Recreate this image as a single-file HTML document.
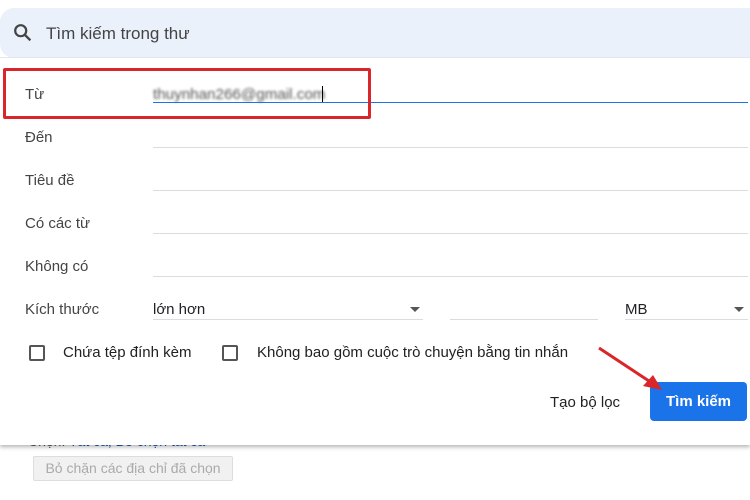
<!DOCTYPE html>
<html><head><meta charset="utf-8"><style>
body{margin:0;width:750px;height:500px;background:#fff;font-family:"Liberation Sans",Arial,sans-serif;position:relative;overflow:hidden;color:#202124}
.a{position:absolute}
.lbl{position:absolute;left:25px;font-size:15px;color:#444}
.ln{position:absolute;left:153px;right:2px;height:1px;background:#dadce0}
.cb{position:absolute;width:12px;height:12px;border:2px solid #555;border-radius:2px}
</style></head><body>
<div class="a" style="left:28px;top:433px;font-size:14px;color:#555">Chọn: <span style="color:#15c">Tất cả, Bỏ chọn tất cả</span></div>
<div class="a" style="left:0;top:0;width:750px;height:445px;background:#fff;box-shadow:0 2px 4px rgba(0,0,0,.3)"></div>
<div class="a" style="left:0;top:8px;width:750px;height:50px;background:#eaf1fb;border-top-left-radius:14px;border-bottom-left-radius:14px"></div>
<svg class="a" style="left:12px;top:22px" width="22" height="22" viewBox="0 0 24 24"><circle cx="9.5" cy="9.5" r="6" fill="none" stroke="#444" stroke-width="2.4"/><path d="M14 14l6 6" stroke="#444" stroke-width="2.6"/></svg>
<div class="a" style="left:46px;top:24px;font-size:17px;color:#444">Tìm kiếm trong thư</div>
<div class="a" style="left:0;top:57px;width:750px;height:1px;background:#e3e6ea"></div>

<div class="lbl" style="top:86px">Từ</div>
<div class="a" style="left:153px;top:86px;font-size:15.2px;color:#555;filter:blur(1.2px)">thuynhan266@gmail.com</div>
<div class="a" style="left:322px;top:86px;width:1px;height:17px;background:#000"></div>
<div class="ln" style="top:102px;background:#1a73e8;height:1px"></div>
<div class="a" style="left:3px;top:68px;width:362px;height:45px;border:3px solid #d9262a;border-radius:2px"></div>

<div class="lbl" style="top:129px">Đến</div><div class="ln" style="top:147px"></div>
<div class="lbl" style="top:172px">Tiêu đề</div><div class="ln" style="top:190px"></div>
<div class="lbl" style="top:215px">Có các từ</div><div class="ln" style="top:233px"></div>
<div class="lbl" style="top:258px">Không có</div><div class="ln" style="top:276px"></div>
<div class="lbl" style="top:301px">Kích thước</div>
<div class="a" style="left:153px;top:301px;font-size:15px">lớn hơn</div>
<div class="a" style="left:153px;top:319px;width:270px;height:1px;background:#dadce0"></div>
<div class="a" style="left:410px;top:307px;border:5px solid transparent;border-top:5px solid #555"></div>
<div class="a" style="left:450px;top:319px;width:148px;height:1px;background:#dadce0"></div>
<div class="a" style="left:625px;top:301px;font-size:15px">MB</div>
<div class="a" style="left:625px;top:319px;width:123px;height:1px;background:#dadce0"></div>
<div class="a" style="left:734px;top:307px;border:5px solid transparent;border-top:5px solid #555"></div>

<div class="cb" style="left:29px;top:345px"></div>
<div class="a" style="left:63px;top:344px;font-size:15px">Chứa tệp đính kèm</div>
<div class="cb" style="left:222px;top:345px"></div>
<div class="a" style="left:257px;top:344px;font-size:15px">Không bao gồm cuộc trò chuyện bằng tin nhắn</div>

<div class="a" style="left:550px;top:394px;font-size:15px">Tạo bộ lọc</div>
<div class="a" style="left:650px;top:382px;width:97px;height:39px;background:#1a73e8;border-radius:4px;color:#fff;font-size:15px;font-weight:bold;text-align:center;line-height:39px">Tìm kiếm</div>
<svg class="a" style="left:0;top:0" width="750" height="500"><path d="M599 348L652 383" stroke="#d9262a" stroke-width="3"/><path d="M662 390L643 386L653 375Z" fill="#d9262a"/></svg>

<div class="a" style="left:33px;top:456px;width:198px;height:23px;background:#f1f1f1;border:1px solid #ddd;border-radius:2px;font-size:14px;color:#aaa;line-height:23px;text-align:center">Bỏ chặn các địa chỉ đã chọn</div>
</body></html>
